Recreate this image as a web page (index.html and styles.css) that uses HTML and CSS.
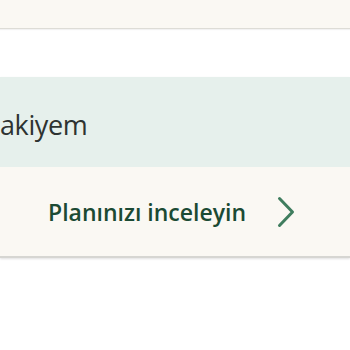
FILE: index.html
```html
<!DOCTYPE html>
<html lang="tr">
<head>
<meta charset="utf-8">
<link rel="stylesheet" href="styles.css">
</head>
<body>
  <div class="top-bar"></div>
  <div class="gap"></div>
  <section class="card">
    <div class="balance-row">
      <span class="balance-label">akiyem</span>
    </div>
    <a class="action-row" href="#">
      <span class="action-label">Planınızı inceleyin</span>
      <svg class="chevron" width="18" height="32" viewBox="0 0 18 32" aria-hidden="true">
        <path d="M2.5 2.5 L15.5 16 L2.5 29.5" fill="none" stroke="#3f7d5e" stroke-width="3" stroke-linecap="round" stroke-linejoin="round"/>
      </svg>
    </a>
  </section>
</body>
</html>
```

FILE: styles.css
```css
html, body {
  margin: 0;
  padding: 0;
  background: #ffffff;
  width: 350px;
  height: 350px;
  overflow: hidden;
}

body {
  font-family: "Open Sans", "Lato", sans-serif;
}

.top-bar {
  height: 28px;
  background: #faf8f3;
  border-bottom: 1px solid #dddcd6;
  box-shadow: 0 1px 1px rgba(0, 0, 0, 0.05);
}

.gap {
  height: 48px;
}

.card {
  display: flex;
  flex-direction: column;
  box-shadow: 0 1px 2px rgba(0, 0, 0, 0.12);
}

.balance-row {
  height: 90px;
  background: #e6f0ec;
  display: flex;
  align-items: center;
}

.balance-label {
  font-size: 27px;
  color: #2e3331;
  line-height: 1;
  letter-spacing: -0.4px;
  padding-top: 4px;
}

.action-row {
  height: 89px;
  background: #faf8f3;
  border-bottom: 2px solid #d6d6d2;
  display: flex;
  align-items: center;
  padding-left: 48px;
  gap: 31px;
  text-decoration: none;
}

.action-label {
  font-size: 23px;
  font-weight: 600;
  color: #1b4a33;
  line-height: 1;
  padding-top: 2px;
}

.chevron {
  display: block;
}
```
